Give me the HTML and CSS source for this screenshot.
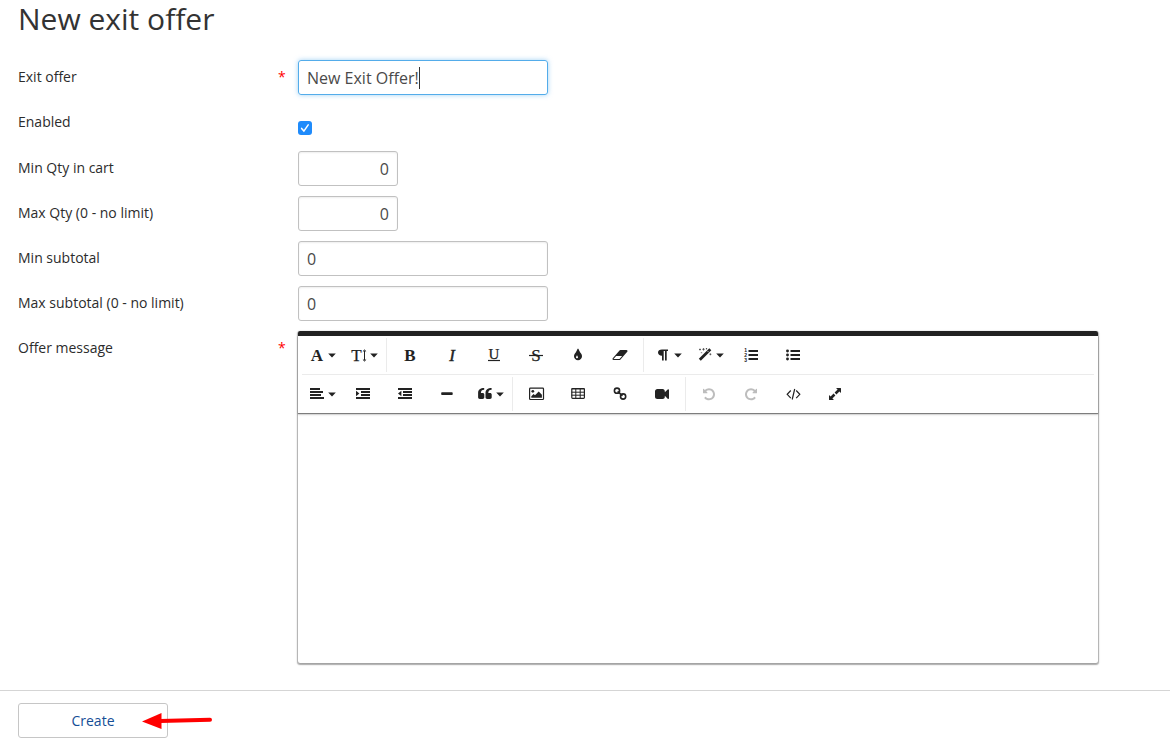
FILE: index.html
```html
<!DOCTYPE html>
<html lang="en">
<head>
<meta charset="utf-8">
<title>New exit offer</title>
<link rel="stylesheet" href="styles.css">
</head>
<body>
<svg class="defs" width="0" height="0">
  <defs>
    <path id="caret" d="M28.200 17.400h7.600l-3.800 4z"/>
    <path id="undo" d="M1664 896q0 156-61 298t-164 245-245 164-298 61q-172 0-327-72.500t-264-204.500q-7-10-6.500-22.500t8.500-20.500l137-138q10-9 25-9 16 2 23 12 73 95 179 147t225 52q104 0 198.500-40.500t163.500-109.500 109.500-163.500 40.500-198.500-40.500-198.500-109.500-163.500-163.500-109.500-198.500-40.500q-98 0-188 35.500t-160 101.500l137 138q31 30 14 69-17 40-59 40h-448q-26 0-45-19t-19-45v-448q0-42 40-59 39-17 69 14l130 129q107-101 244.500-156.500t284.500-55.500q156 0 298 61t245 164 164 245 61 298z"/>
  </defs>
</svg>
<main class="page">
  <h1 class="title">New exit offer</h1>
  <form class="form">
    <div class="row"><label class="label">Exit offer</label><span class="required">*</span><div class="input wide focused">New Exit Offer!<span class="cursor"></span></div></div>
    <div class="row row-check"><label class="label">Enabled</label><span class="required"></span>
      <svg class="checkbox" viewBox="0 0 14 14"><rect width="14" height="14" rx="3" fill="#1f8bfb"/><path d="M3.600 7.400l2.300 2.700 4.300-6.300" fill="none" stroke="#fff" stroke-width="1.500" stroke-linecap="round"/></svg>
    </div>
    <div class="row"><label class="label">Min Qty in cart</label><span class="required"></span><div class="input narrow">0</div></div>
    <div class="row"><label class="label">Max Qty (0 - no limit)</label><span class="required"></span><div class="input narrow">0</div></div>
    <div class="row"><label class="label">Min subtotal</label><span class="required"></span><div class="input wide">0</div></div>
    <div class="row"><label class="label">Max subtotal (0 - no limit)</label><span class="required"></span><div class="input wide">0</div></div>
    <div class="row row-editor"><label class="label">Offer message</label><span class="required">*</span>
      <div class="editor">
        <div class="toolbar">
          <div class="tools">
            <div class="group">
              <svg class="tool" viewBox="0 0 42 38"><text x="17" y="24.500" class="glyph bold">A</text><use href="#caret"/></svg>
              <svg class="tool" viewBox="0 0 42 38"><text x="14.500" y="24.500" class="glyph">T</text><path d="M22.500 14.500v10M20.900 15.500l1.600-1.500 1.600 1.500M20.900 23.500l1.600 1.500 1.600-1.500" class="line arrows"/><use href="#caret"/></svg>
            </div>
            <div class="group">
              <svg class="tool" viewBox="0 0 42 38"><text x="21" y="24.500" class="glyph bold">B</text></svg>
              <svg class="tool" viewBox="0 0 42 38"><text x="21" y="24.500" class="glyph italic">I</text></svg>
              <svg class="tool" viewBox="0 0 42 38"><text x="21" y="23" class="glyph small">U</text><path d="M15 24.500h12" class="line"/></svg>
              <svg class="tool" viewBox="0 0 42 38"><text x="21" y="24.800" class="glyph">S</text><path d="M14 19.500h14" class="line"/></svg>
              <svg class="tool" viewBox="0 0 42 38"><path transform="translate(14 12.200) scale(.0078125)" d="M896 1152q0-36-20-69-1-1-15.500-22.500t-25.500-38-25-44-21-50.500q-4-16-21-16t-21 16q-7 23-21 50.500t-25 44-25.500 38-15.500 22.500q-20 33-20 69 0 53 37.500 90.500t90.500 37.500 90.500-37.500 37.500-90.500zm512-128q0 212-150 362t-362 150-362-150-150-362q0-145 81-275 6-9 62.500-90.500t101-151 99.500-178 83-201.500q9-30 34-47t51-17 51.500 17 33.500 47q28 93 83 201.500t99.500 178 101 151 62.500 90.500q81 127 81 275z"/></svg>
              <svg class="tool" viewBox="0 0 42 38"><path transform="translate(14 12) scale(.0078125)" d="M832 1408l336-384h-768l-336 384h768zm1013-1077q15 34 9.500 71.500t-30.500 65.500l-896 1024q-38 44-96 44h-768q-38 0-69.500-20.500t-47.500-54.500q-15-34-9.500-71.500t30.500-65.500l896-1024q38-44 96-44h768q38 0 69.500 20.500t47.500 54.500z"/></svg>
            </div>
            <div class="group last">
              <svg class="tool" viewBox="0 0 42 38"><path d="M22 13.500v1.500h-1.300v9.500h-1.700v-9.500h-1.300v9.500H16v-4.700c-2.500-.1-4-1.300-4-3.200s1.500-3.100 4-3.100z"/><use href="#caret"/></svg>
              <svg class="tool" viewBox="0 0 42 38"><path d="M11.800 23.700L22.300 13.200" class="line wand"/><path d="M19.300 14.800l1.400 1.400" stroke="#fff" stroke-width=".7"/><path d="M11 13.500h2M12 12.500v2M15.500 12v2.600M14.200 13.300h2.600M18.500 12v1.400M17.800 12.700h1.400M12.800 16.700h1.400M22.400 17.300v2M21.400 18.300h2" class="line spark"/><use href="#caret"/></svg>
              <svg class="tool" viewBox="0 0 42 38"><path d="M18.500 15h9.500M18.500 19h9.500M18.500 23h9.500" class="line thick"/><text x="15.700" y="16.300" class="number">1</text><text x="15.700" y="21" class="number">2</text><text x="15.700" y="25.700" class="number">3</text></svg>
              <svg class="tool" viewBox="0 0 42 38"><path d="M18.500 15h9.500M18.500 19h9.500M18.500 23h9.500" class="line thick"/><circle cx="15.500" cy="15" r="1.450"/><circle cx="15.500" cy="19" r="1.450"/><circle cx="15.500" cy="23" r="1.450"/></svg>
            </div>
          </div>
          <div class="tools">
            <div class="group">
              <svg class="tool" viewBox="0 0 42 38"><path d="M10 14h10M10 17h13M10 20h11M10 23h14" class="line bars"/><use href="#caret"/></svg>
              <svg class="tool" viewBox="0 0 42 38"><path d="M14 14h14M19 17h9M19 20h9M14 23h14" class="line bars"/><path d="M14 15.800l3.400 2.700-3.400 2.700z"/></svg>
              <svg class="tool" viewBox="0 0 42 38"><path d="M14 14h14M19 17h9M19 20h9M14 23h14" class="line bars"/><path d="M17.400 15.800l-3.400 2.700 3.400 2.700z"/></svg>
              <svg class="tool" viewBox="0 0 42 38"><rect x="15.200" y="17.200" width="11.500" height="2.800" rx=".8"/></svg>
              <svg class="tool" viewBox="0 0 42 38"><path id="quote" d="M16.200 13v1.700c-2.300 0-3.300 1.200-3.300 3.300h1.700c1 0 1.700.7 1.700 1.600v2.700c0 1-.7 1.700-1.700 1.700h-2.800c-1 0-1.700-.7-1.700-1.700v-4.600c0-3 2.300-4.700 6.100-4.700z"/><use href="#quote" x="7.400"/><use href="#caret"/></svg>
            </div>
            <div class="group">
              <svg class="tool" viewBox="0 0 42 38"><rect x="14.600" y="13.200" width="13.900" height="11.300" rx=".8" class="line box"/><circle cx="17.800" cy="16.300" r="1.400"/><path d="M16.300 22.800v-1.600l2.300-2.300 1.400 1.400 3.700-3.800 3.200 3.200v3.100z"/></svg>
              <svg class="tool" viewBox="0 0 42 38"><rect x="14.800" y="13.500" width="12.600" height="9.900" rx=".8" class="line box"/><path d="M14.500 14h13M14.500 17.200h13M14.500 20.200h13M18.800 14v9M23.200 14v9" class="line grid"/></svg>
              <svg class="tool" viewBox="0 0 42 38"><circle cx="18" cy="15.700" r="2.600" class="line ring"/><circle cx="24.100" cy="21.500" r="2.600" class="line ring"/><path d="M18.700 16.300l4.700 4.500" class="line ring"/></svg>
              <svg class="tool" viewBox="0 0 42 38"><path d="M16.400 14h5.200c1.400 0 2.200 1 2.200 2.300v1l2.900-2.900c.5-.5 1.300-.2 1.300.5v8.300c0 .7-.8 1-1.300.5l-2.900-2.900v1c0 1.300-.8 2.300-2.200 2.300h-5.200c-1.400 0-2.400-1-2.400-2.300v-5.500c0-1.300 1-2.300 2.400-2.300z"/></svg>
            </div>
            <div class="group last">
              <svg class="tool disabled" viewBox="0 0 42 38"><use href="#undo" transform="translate(14 12.300) scale(.0078125)"/></svg>
              <svg class="tool disabled" viewBox="0 0 42 38"><use href="#undo" transform="translate(28 12.300) scale(-.0078125 .0078125)"/></svg>
              <svg class="tool" viewBox="0 0 42 38"><path d="M18.800 15.500l-3.600 3.800 3.600 3.800M24.200 15.500l3.600 3.800-3.600 3.800M22.700 14l-2.500 10.500" class="line"/></svg>
              <svg class="tool" viewBox="0 0 42 38"><path d="M22 13h4.500q.5 0 .5.500V18l-1.600-1.600-3 3-1.800-1.800 3-3zM20 25h-4.500q-.5 0-.5-.5V20l1.600 1.600 3-3 1.800 1.800-3 3z"/></svg>
            </div>
          </div>
        </div>
        <div class="content"></div>
      </div>
    </div>
  </form>
  <footer class="footer">
    <button class="create" type="button">Create</button>
    <svg class="arrow" viewBox="0 0 72 20"><path d="M18 10.900L68 9.700" stroke="#f00" stroke-width="4" stroke-linecap="round"/><path d="M0 11.500L19.500 3v16z" fill="#f00"/></svg>
  </footer>
</main>
</body>
</html>
```
FILE: styles.css
```css
* { box-sizing: border-box; }
body {
  margin: 0;
  background: #fff;
  color: #2c2c2c;
  font: 14px/20px "Open Sans", sans-serif;
}
.defs { display: block; }
.page { height: 749px; }
.title { margin: 0; padding-left: 18px; height: 60px; font-size: 30px; line-height: 38px; font-weight: 400; color: #333; }
.form { height: 630px; padding-left: 18px; }
.row { display: flex; height: 45px; align-items: flex-start; }
.row-check { height: 46px; }
.row-editor { height: auto; }
.label { width: 260px; padding-top: 7px; }
.required { width: 20px; padding-top: 7px; color: #f00; font-size: 14px; }
.input {
  display: flex;
  align-items: center;
  height: 35px;
  padding: 1px 8px 0;
  border: 1px solid #c1c1c1;
  border-radius: 3px;
  box-shadow: inset 0 1px 2px rgba(0, 0, 0, .07);
  color: #4a4a4a;
  font-size: 16px;
}
.wide { width: 250px; }
.narrow { width: 100px; justify-content: flex-end; }
.focused { border-color: #53acea; box-shadow: 0 0 5px rgba(83, 172, 234, .55); }
.cursor { width: 1px; height: 22px; background: #333; }
.checkbox { width: 14px; height: 14px; margin-top: 16px; }
.editor {
  width: 800px;
  height: 332px;
  border-top: 5px solid #222;
  border-radius: 2px;
  box-shadow: 0 1px 3px rgba(0, 0, 0, .2), 0 1px 1px 1px rgba(0, 0, 0, .26);
}
.toolbar { height: 77px; box-shadow: 0 1px 1px rgba(0, 0, 0, .45), 0 2px 2px rgba(0, 0, 0, .12); }
.tools { display: flex; height: 38px; padding-left: 2px; }
.tools + .tools { border-top: 1px solid #ebebeb; height: 39px; margin: 0 4px; padding: 0; }
.tools + .tools .group:first-child { margin-left: -2px; }
.group { display: flex; margin-right: 2px; padding-right: 2px; background: linear-gradient(#ebebeb, #ebebeb) right 2px / 1px 34px no-repeat; border-right: 1px solid transparent; background-origin: border-box; }
.group.last { background: none; }
.tool { display: block; width: 42px; height: 38px; fill: #222; }
.disabled { fill: #bdbdbd; }
.line { fill: none; stroke: #222; stroke-width: 1.2; }
.thick { stroke-width: 2; }
.bars { stroke-width: 2; }
.wand { stroke-width: 2.8; }
.spark { stroke-width: .6; }
.arrows { stroke-width: 1; }
.grid { stroke-width: 1; }
.box { stroke-width: 1.2; }
.ring { stroke-width: 1.6; }
.glyph { font: 17px "Liberation Serif", serif; text-anchor: middle; stroke: #222; stroke-width: .25; }
.small { font-size: 15px; }
.bold { font-weight: 700; stroke: none; }
.italic { font-style: italic; stroke-width: .4; }
.number { font: 700 5px "Liberation Sans", sans-serif; text-anchor: middle; }
.footer { position: relative; height: 59px; border-top: 1px solid #d5d5d5; padding: 12px 18px; }
.create {
  display: block;
  width: 150px;
  height: 35px;
  padding: 0;
  border: 1px solid #c6c6c6;
  border-radius: 3px;
  background: #fff;
  color: #154e96;
  font: 14px "Open Sans", sans-serif;
}
.arrow { position: absolute; left: 142px; top: 19px; width: 72px; height: 20px; }
```
